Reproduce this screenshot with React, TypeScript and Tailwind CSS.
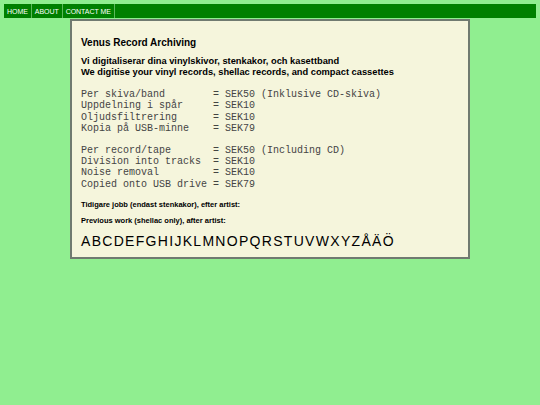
export default function App() {
  const sv = [
    ['Per skiva/band', 'SEK50 (Inklusive CD-skiva)'],
    ['Uppdelning i spår', 'SEK10'],
    ['Oljudsfiltrering', 'SEK10'],
    ['Kopia på USB-minne', 'SEK79'],
  ]
  const en = [
    ['Per record/tape', 'SEK50 (Including CD)'],
    ['Division into tracks', 'SEK10'],
    ['Noise removal', 'SEK10'],
    ['Copied onto USB drive', 'SEK79'],
  ]
  const pad = (s: string) => s.padEnd(22, ' ')

  return (
    <div className="min-h-[405px] bg-[#90EE90] px-1 pt-1 font-['Liberation_Sans',Arial,sans-serif] text-black">
      {/* nav */}
      <div className="flex h-[14px] bg-[#008000]">
        {['HOME', 'ABOUT', 'CONTACT ME'].map((n) => (
          <div
            key={n}
            className="flex items-center border-r border-[#5cb85c] px-[3px] text-[7px] leading-none tracking-[-0.05px] text-white"
          >
            {n}
          </div>
        ))}
      </div>

      {/* card */}
      <div className="mx-auto mt-px w-[400px] border-2 border-[#707a70] bg-[#F5F5DC] px-[9px] pt-[16px] pb-[8px]">
        <h1 className="text-[10px] font-bold leading-[12px]">Venus Record Archiving</h1>
        <p className="mt-[7px] text-[9.3px] font-bold leading-[11px]">
          Vi digitaliserar dina vinylskivor, stenkakor, och kasettband
          <br />
          We digitise your vinyl records, shellac records, and compact cassettes
        </p>

        <pre className="mt-[11px] font-['Liberation_Mono','Courier_New',monospace] text-[10px] leading-[11.4px] text-[#444]">
          {sv.map(([a, b]) => `${pad(a)}= ${b}`).join('\n')}
        </pre>
        <pre className="mt-[10px] font-['Liberation_Mono','Courier_New',monospace] text-[10px] leading-[11.4px] text-[#444]">
          {en.map(([a, b]) => `${pad(a)}= ${b}`).join('\n')}
        </pre>

        <p className="mt-[10px] text-[7.5px] font-bold leading-[9px]">Tidigare jobb (endast stenkakor), efter artist:</p>
        <p className="mt-[7px] text-[7.5px] font-bold leading-[9px]">Previous work (shellac only), after artist:</p>

        <div className="mt-[8px] text-[14px] leading-[16px] tracking-[1.3px]">ABCDEFGHIJKLMNOPQRSTUVWXYZÅÄÖ</div>
      </div>
    </div>
  )
}
